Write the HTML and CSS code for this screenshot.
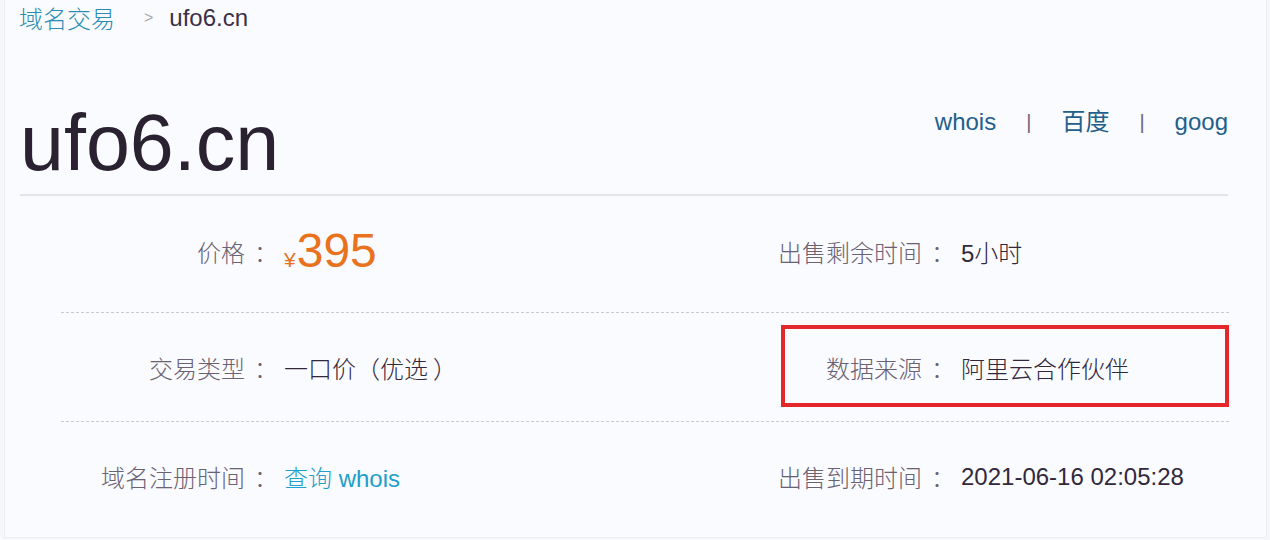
FILE: index.html
```html
<!DOCTYPE html>
<html lang="zh-CN">
<head>
<meta charset="utf-8">
<title>ufo6.cn - 域名交易</title>
<link rel="stylesheet" href="styles.css">
</head>
<body>
<div class="frame">
  <nav class="crumbs">
    <a class="crumb-link" href="#">域名交易</a>
    <span class="crumb-sep">&gt;</span>
    <span class="crumb-cur">ufo6.cn</span>
  </nav>
  <header class="head">
    <h1 class="domain">ufo6.cn</h1>
    <div class="quick">
      <a href="#" class="q-link">whois</a>
      <span class="q-sep">|</span>
      <a href="#" class="q-link">百度</a>
      <span class="q-sep">|</span>
      <a href="#" class="q-link">goog</a>
    </div>
  </header>
  <div class="info">
    <div class="row row-first">
      <div class="label">价格<span class="colon">：</span></div>
      <div class="value"><span class="price"><span class="yen">¥</span>395</span></div>
      <div class="label">出售剩余时间<span class="colon">：</span></div>
      <div class="value">5小时</div>
    </div>
    <div class="row">
      <div class="label">交易类型<span class="colon">：</span></div>
      <div class="value">一口价<span class="paren-l">（</span>优选<span class="paren-r">）</span></div>
      <div class="label">数据来源<span class="colon">：</span></div>
      <div class="value">阿里云合作伙伴</div>
      <span class="mark"></span>
    </div>
    <div class="row row-last">
      <div class="label">域名注册时间<span class="colon">：</span></div>
      <div class="value"><a href="#" class="v-link">查询 whois</a></div>
      <div class="label">出售到期时间<span class="colon">：</span></div>
      <div class="value">2021-06-16 02:05:28</div>
    </div>
  </div>
</div>
</body>
</html>
```
FILE: styles.css
```css
html, body {
  margin: 0;
  padding: 0;
  background: #f6f7fa;
}
body {
  font-family: "Liberation Sans", "Noto Sans CJK SC", sans-serif;
  color: #2e2538;
}
a { text-decoration: none; }

.frame {
  width: 1263px;
  height: 538px;
  margin-left: 4px;
  background: #fafbfe;
  border: 1px solid #eceef3;
  border-top: none;
  box-sizing: border-box;
  padding: 0 0 0 15px;
  overflow: hidden;
}

.crumbs {
  display: flex;
  align-items: center;
  height: 30px;
  padding-top: 3px;
  font-size: 24px;
  line-height: 30px;
}
.crumb-link {
  color: #2b8db3;
  font-family: "Noto Sans CJK SC", sans-serif;
  font-weight: 300;
  margin-left: -1px;
}
.crumb-sep {
  color: #a9a7b0;
  font-size: 16px;
  margin: 0 16px 0 29px;
}
.crumb-cur {
  color: #3a3046;
}

.head {
  display: flex;
  justify-content: space-between;
  align-items: flex-start;
  width: 1208px;
  margin-top: 65px;
  border-bottom: 2px solid #e1e4ea;
}
.domain {
  margin: 0 0 6px 0;
  font-weight: normal;
  font-size: 79px;
  line-height: 90px;
  color: #2a2230;
}
.quick {
  display: flex;
  align-items: center;
  font-size: 24px;
  line-height: 30px;
  margin-top: 9px;
}
.q-link {
  color: #235f8a;
}
.q-sep {
  color: #6e6676;
  font-size: 20px;
  margin: 0 30px;
}

.info {
  margin-left: 41px;
  width: 1168px;
}
.row {
  position: relative;
  display: grid;
  grid-template-columns: 208px 492px 185px 1fr;
  align-items: center;
  height: 109px;
  border-bottom: 1px dashed #c8cad2;
  box-sizing: border-box;
}
.row-first {
  height: 117px;
  padding-bottom: 6px;
}
.row-last {
  border-bottom: none;
}
.label {
  text-align: right;
  font-family: "Noto Sans CJK SC", sans-serif;
  font-weight: 300;
  font-size: 24px;
  color: #6a6273;
  white-space: nowrap;
}
.colon {
  display: inline-block;
  width: 24px;
  text-indent: 9px;
  text-align: left;
  overflow: visible;
}
.value {
  padding-left: 15px;
  font-size: 24px;
  font-weight: 300;
  color: #32283c;
  white-space: nowrap;
}
.paren-l {
  display: inline-block;
  width: 24px;
}
.paren-r {
  display: inline-block;
  text-indent: 5px;
  width: 24px;
}
.price {
  font-family: "Liberation Sans", sans-serif;
  font-size: 48px;
  color: #e8721d;
  line-height: 1;
}
.yen {
  font-size: 21px;
  margin-right: 1px;
}
.v-link {
  color: #1f9fcc;
}
.mark {
  position: absolute;
  left: 720px;
  right: 0;
  top: 12px;
  height: 82px;
  border: 4px solid #e3272b;
  box-sizing: border-box;
  pointer-events: none;
}
```
